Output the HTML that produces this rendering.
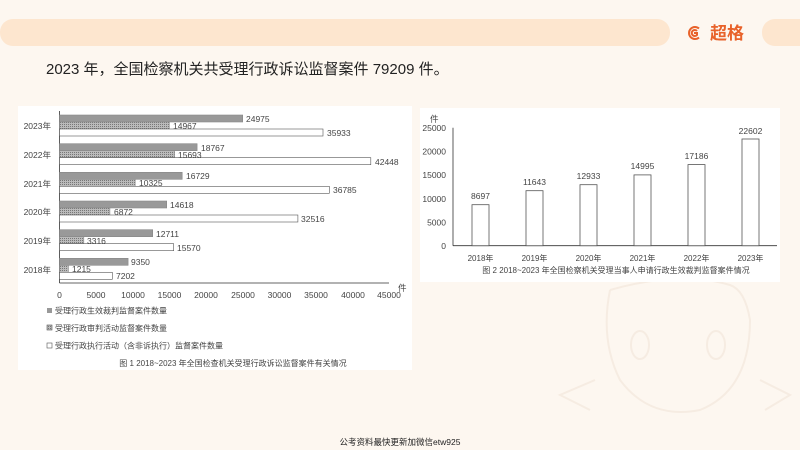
<!DOCTYPE html>
<html><head><meta charset="utf-8"><style>
html,body{margin:0;padding:0;width:800px;height:450px;overflow:hidden;background:#fdf7f0;}
svg{display:block;font-family:"Liberation Sans","Noto Sans CJK SC",sans-serif;}
</style></head><body>
<svg width="800" height="450" viewBox="0 0 800 450" xmlns="http://www.w3.org/2000/svg">
<defs>
<pattern id="h" width="2" height="2" patternUnits="userSpaceOnUse"><rect width="2" height="2" fill="#bbb"/><rect width="1" height="1" fill="#777"/></pattern>
</defs>
<rect x="0" y="19" width="670" height="27" rx="13" fill="#fde6cf"/>
<rect x="762" y="19" width="60" height="27" rx="13" fill="#fde6cf"/>
<g fill="none" stroke="#e8622a" stroke-width="2"><path d="M699 28.5 A6 6 0 1 0 699 37.5"/><path d="M697 31 A3 3 0 1 0 697 35 L697 33 L694 33"/></g>
<text x="710" y="39" font-size="17" font-weight="bold" fill="#e8622a">超格</text>
<text x="46" y="74" font-size="15" fill="#222">2023 年，全国检察机关共受理行政诉讼监督案件 79209 件。</text>

<g fill="none" stroke="#f6ece2" stroke-width="2"><path d="M610 290 Q600 340 620 380 Q650 420 700 410 Q750 390 750 320 Q745 290 730 285 Q680 270 610 290"/><ellipse cx="640" cy="345" rx="9" ry="14"/><ellipse cx="716" cy="345" rx="9" ry="14"/><path d="M595 380 L560 395 L590 410 M760 380 L790 395 L765 410"/></g>

<rect x="18" y="106" width="394" height="264" fill="#fff"/>
<g font-size="8.5" fill="#444">
<line x1="59.5" y1="111" x2="59.5" y2="283" stroke="#333" stroke-width="0.8"/>
<line x1="59.5" y1="283" x2="389" y2="283" stroke="#333" stroke-width="0.8"/>
<g stroke="#888" stroke-width="0.6">
<rect x="59.5" y="115" width="183.2" height="7" fill="#999"/><rect x="59.5" y="122" width="109.8" height="7" fill="url(#h)"/><rect x="59.5" y="129" width="263.5" height="7" fill="#fff" stroke="#555"/>
<rect x="59.5" y="143.7" width="137.6" height="7" fill="#999"/><rect x="59.5" y="150.7" width="115.1" height="7" fill="url(#h)"/><rect x="59.5" y="157.7" width="311.3" height="7" fill="#fff" stroke="#555"/>
<rect x="59.5" y="172.3" width="122.7" height="7" fill="#999"/><rect x="59.5" y="179.3" width="75.7" height="7" fill="url(#h)"/><rect x="59.5" y="186.3" width="269.8" height="7" fill="#fff" stroke="#555"/>
<rect x="59.5" y="201" width="107.2" height="7" fill="#999"/><rect x="59.5" y="208" width="50.4" height="7" fill="url(#h)"/><rect x="59.5" y="215" width="238.4" height="7" fill="#fff" stroke="#555"/>
<rect x="59.5" y="229.7" width="93.2" height="7" fill="#999"/><rect x="59.5" y="236.7" width="24.3" height="7" fill="url(#h)"/><rect x="59.5" y="243.7" width="114.2" height="7" fill="#fff" stroke="#555"/>
<rect x="59.5" y="258.3" width="68.6" height="7" fill="#999"/><rect x="59.5" y="265.3" width="8.9" height="7" fill="url(#h)"/><rect x="59.5" y="272.3" width="52.8" height="7" fill="#fff" stroke="#555"/>
</g>
<text x="246" y="122">24975</text><text x="173" y="129">14967</text><text x="327" y="136">35933</text>
<text x="201" y="151">18767</text><text x="178" y="158">15693</text><text x="375" y="165">42448</text>
<text x="186" y="179">16729</text><text x="139" y="186">10325</text><text x="333" y="193">36785</text>
<text x="170" y="208">14618</text><text x="114" y="215">6872</text><text x="301" y="222">32516</text>
<text x="156" y="237">12711</text><text x="87" y="244">3316</text><text x="177" y="251">15570</text>
<text x="131" y="265">9350</text><text x="72" y="272">1215</text><text x="116" y="279">7202</text>
<g text-anchor="end"><text x="51" y="129">2023年</text><text x="51" y="158">2022年</text><text x="51" y="187">2021年</text><text x="51" y="215">2020年</text><text x="51" y="244">2019年</text><text x="51" y="273">2018年</text></g>
<g text-anchor="middle"><text x="59.5" y="298">0</text><text x="96" y="298">5000</text><text x="133" y="298">10000</text><text x="169.5" y="298">15000</text><text x="206" y="298">20000</text><text x="243" y="298">25000</text><text x="279.5" y="298">30000</text><text x="316" y="298">35000</text><text x="353" y="298">40000</text><text x="389" y="298">45000</text></g>
<text x="398" y="291">件</text>
<rect x="47" y="308" width="5" height="5" fill="#999"/><text x="55" y="313.5" font-size="8">受理行政生效裁判监督案件数量</text>
<rect x="47" y="325" width="5" height="5" fill="url(#h)" stroke="#555" stroke-width="0.6"/><text x="55" y="331" font-size="8">受理行政审判活动监督案件数量</text>
<rect x="47" y="343" width="5" height="5" fill="#fff" stroke="#555" stroke-width="0.6"/><text x="55" y="348.5" font-size="8">受理行政执行活动（含非诉执行）监督案件数量</text>
<text x="233" y="366" font-size="8" text-anchor="middle">图 1 2018~2023 年全国检查机关受理行政诉讼监督案件有关情况</text>
</g>

<rect x="420" y="108" width="360" height="174" fill="#fff"/>
<g font-size="8.5" fill="#444">
<line x1="453" y1="127.7" x2="453" y2="245.7" stroke="#333" stroke-width="0.8"/>
<line x1="453" y1="245.7" x2="777" y2="245.7" stroke="#333" stroke-width="0.8"/>
<g text-anchor="end"><text x="446" y="131">25000</text><text x="446" y="154.5">20000</text><text x="446" y="178">15000</text><text x="446" y="202">10000</text><text x="446" y="225.5">5000</text><text x="446" y="249">0</text></g>
<text x="430" y="122">件</text>
<g fill="#fff" stroke="#555" stroke-width="0.8">
<rect x="472" y="204.7" width="17" height="41"/><rect x="526" y="190.7" width="17" height="55"/><rect x="580" y="184.7" width="17" height="61"/><rect x="634" y="174.9" width="17" height="70.8"/><rect x="688" y="164.6" width="17" height="81.1"/><rect x="742" y="139" width="17" height="106.7"/>
</g>
<g text-anchor="middle"><text x="480.5" y="199">8697</text><text x="534.5" y="185">11643</text><text x="588.5" y="179">12933</text><text x="642.5" y="169">14995</text><text x="696.5" y="159">17186</text><text x="750.5" y="134">22602</text>
<g font-size="8"><text x="480.5" y="261">2018年</text><text x="534.5" y="261">2019年</text><text x="588.5" y="261">2020年</text><text x="642.5" y="261">2021年</text><text x="696.5" y="261">2022年</text><text x="750.5" y="261">2023年</text></g>
<text x="616" y="273" font-size="8">图 2 2018~2023 年全国检察机关受理当事人申请行政生效裁判监督案件情况</text></g>
</g>

<text x="400" y="445" font-size="8.5" fill="#222" text-anchor="middle">公考资料最快更新加微信etw925</text>
</svg>
</body></html>
